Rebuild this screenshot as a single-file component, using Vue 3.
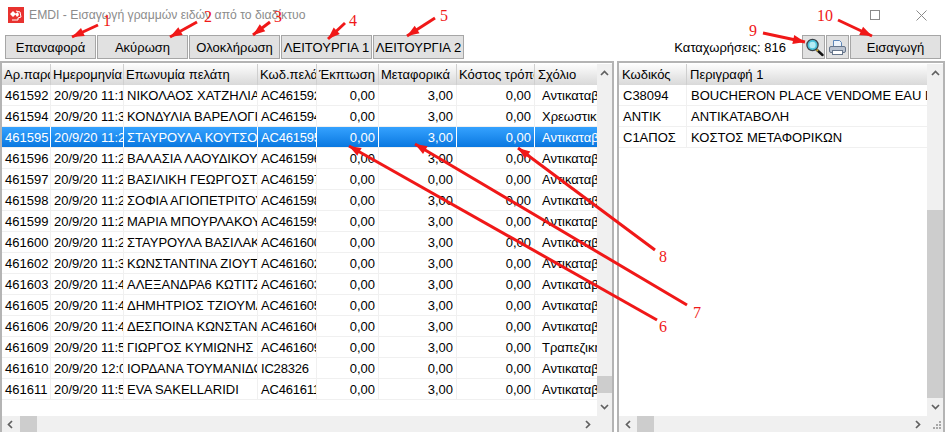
<script setup>
const left = [
  ['461592','20/9/20 11:18','ΝΙΚΟΛΑΟΣ ΧΑΤΖΗΛΙΑΣ ΝΙΚ','AC461592','0,00','3,00','0,00','Αντικαταβολή'],
  ['461594','20/9/20 11:34','ΚΟΝΔΥΛΙΑ ΒΑΡΕΛΟΓΙΑΝΝΗ','AC461594','0,00','3,00','0,00','Χρεωστική'],
  ['461595','20/9/20 11:25','ΣΤΑΥΡΟΥΛΑ ΚΟΥΤΣΟΥΚΗ','AC461595','0,00','3,00','0,00','Αντικαταβολή'],
  ['461596','20/9/20 11:28','ΒΑΛΑΣΙΑ ΛΑΟΥΔΙΚΟΥ ΒΑΣ','AC461596','0,00','3,00','0,00','Αντικαταβολή'],
  ['461597','20/9/20 11:28','ΒΑΣΙΛΙΚΗ ΓΕΩΡΓΟΣΤΑΘΗ','AC461597','0,00','0,00','0,00','Αντικαταβολή'],
  ['461598','20/9/20 11:29','ΣΟΦΙΑ ΑΓΙΟΠΕΤΡΙΤΟΥ ΣΟΦ','AC461598','0,00','3,00','0,00','Αντικαταβολή'],
  ['461599','20/9/20 11:29','ΜΑΡΙΑ ΜΠΟΥΡΛΑΚΟΥ ΜΑΡ','AC461599','0,00','3,00','0,00','Αντικαταβολή'],
  ['461600','20/9/20 11:29','ΣΤΑΥΡΟΥΛΑ ΒΑΣΙΛΑΚΗ ΣΤΑ','AC461600','0,00','3,00','0,00','Αντικαταβολή'],
  ['461602','20/9/20 11:36','ΚΩΝΣΤΑΝΤΙΝΑ ΖΙΟΥΤΗ ΚΩ','AC461602','0,00','3,00','0,00','Αντικαταβολή'],
  ['461603','20/9/20 11:43','ΑΛΕΞΑΝΔΡΑ6 ΚΩΤΙΤΖΑ ΑΛ','AC461603','0,00','3,00','0,00','Αντικαταβολή'],
  ['461605','20/9/20 11:47','ΔΗΜΗΤΡΙΟΣ ΤΖΙΟΥΜΑΣ ΔΗ','AC461605','0,00','3,00','0,00','Αντικαταβολή'],
  ['461606','20/9/20 11:49','ΔΕΣΠΟΙΝΑ ΚΩΝΣΤΑΝΤΙΝΟΥ','AC461606','0,00','3,00','0,00','Αντικαταβολή'],
  ['461609','20/9/20 11:56','ΓΙΩΡΓΟΣ ΚΥΜΙΩΝΗΣ','AC461609','0,00','3,00','0,00','Τραπεζική'],
  ['461610','20/9/20 12:02','ΙΟΡΔΑΝΑ ΤΟΥΜΑΝΙΔΟΥ ΙΟΡ','IC28326','0,00','0,00','0,00','Αντικαταβολή'],
  ['461611','20/9/20 11:58','EVA SAKELLARIDI','AC461611','0,00','3,00','0,00','Αντικαταβολή'],
]
const leftHead = ['Αρ.παραγγελίας','Ημερομηνία','Επωνυμία πελάτη','Κωδ.πελάτη','Έκπτωση','Μεταφορικά','Κόστος τρόπου','Σχόλιο']
const right = [
  ['C38094','BOUCHERON PLACE VENDOME EAU DE PARFUM'],
  ['ΑΝΤΙΚ','ΑΝΤΙΚΑΤΑΒΟΛΗ'],
  ['C1ΑΠΟΣ','ΚΟΣΤΟΣ ΜΕΤΑΦΟΡΙΚΩΝ'],
]
const arrows = [
  [98,25,72,37],[197,22,170,37],[270,22,253,35],[345,23,328,39],[435,18,407,36],
  [657,320,349,146],[687,305,415,144],[655,250,518,148],[763,33,805,42],[838,20,872,36],
]
const labels = [
  ['1',103,12],['2',204,8],['3',274,8],['4',349,12],['5',440,7],
  ['6',659,318],['7',693,304],['8',659,248],['9',749,22],['10',817,7],
]
function head(x1,y1,x2,y2){
  const a=Math.atan2(y2-y1,x2-x1), l=12, w=4.5
  const bx=x2-l*Math.cos(a), by=y2-l*Math.sin(a)
  const nx=-Math.sin(a)*w, ny=Math.cos(a)*w
  return `${x2},${y2} ${bx+nx},${by+ny} ${bx-nx},${by-ny}`
}
</script>

<template>
  <div class="window">
    <div class="titlebar">
      <svg class="appicon" width="16" height="16" viewBox="0 0 16 16">
        <rect width="16" height="16" fill="#e8322f"/>
        <path d="M8 4l4 1 1 5-3 1v2H4" fill="none" stroke="#fff" stroke-width="1"/>
        <path d="M2 7l3-3 3 3-3 3zM7 7l3-2 1 3-2 2z" fill="#fff"/>
      </svg>
      <span class="title">EMDI - Εισαγωγή γραμμών ειδών από το διαδίκτυο</span>
      <span class="spacer"></span>
      <svg class="winbtn max" width="10" height="10" viewBox="0 0 10 10"><rect x=".5" y=".5" width="9" height="9" fill="none" stroke="#8a8a8a"/></svg>
      <svg class="winbtn close" width="11" height="11" viewBox="0 0 11 11"><path d="M.5.5l10 10M10.5.5l-10 10" stroke="#8a8a8a" fill="none"/></svg>
    </div>

    <div class="toolbar">
      <button class="btn b1">Επαναφορά</button>
      <button class="btn b2">Ακύρωση</button>
      <button class="btn b3">Ολοκλήρωση</button>
      <button class="btn b4">ΛΕΙΤΟΥΡΓΙΑ 1</button>
      <button class="btn b5">ΛΕΙΤΟΥΡΓΙΑ 2</button>
      <span class="spacer"></span>
      <span class="count">Καταχωρήσεις: 816</span>
      <button class="btn icon">
        <svg width="20" height="20" viewBox="0 0 20 20">
          <path d="M13 13l5.5 5" stroke="#111" stroke-width="2.4" stroke-linecap="round"/>
          <path d="M12 12l2 2" stroke="#c9a93a" stroke-width="2"/>
          <circle cx="8.5" cy="8" r="5.6" fill="#4cc4dc" stroke="#39424a" stroke-width="1.3"/>
          <circle cx="8.5" cy="8" r="3.2" fill="#b4ecf4"/>
        </svg>
      </button>
      <button class="btn icon">
        <svg width="17" height="17" viewBox="0 0 17 17">
          <path d="M4.5 7V1.5h6l2 2V7" fill="#eef4fb" stroke="#5d86b8"/>
          <rect x=".5" y="7.5" width="16" height="6" rx="1.5" fill="#b9c2cf" stroke="#66758a"/>
          <rect x="3.5" y="11.5" width="10" height="4" fill="#fff" stroke="#66758a"/>
        </svg>
      </button>
      <button class="btn b10">Εισαγωγή</button>
    </div>

    <div class="panes">
      <section class="pane leftpane">
        <div class="gridarea">
          <div class="grid">
            <div class="row headrow l">
              <div v-for="(h,j) in leftHead" :key="h" class="cell hcell" :class="{hnote:j===7}">{{ h }}</div>
            </div>
            <div v-for="(r,i) in left" :key="r[0]" class="row l" :class="{sel:i===2}">
              <div v-for="(c,j) in r" :key="j" class="cell" :class="{num:j>=4&&j<=6, note:j===7, code:j===3}">{{ c }}</div>
            </div>
          </div>
          <div class="vbar">
            <svg class="chev" width="9" height="6" viewBox="0 0 9 6"><path d="M1 5l3.5-3.5L8 5" fill="none" stroke="#606060" stroke-width="1.7"/></svg>
            <div class="track"><div class="thumb leftthumb"></div></div>
            <svg class="chev" width="9" height="6" viewBox="0 0 9 6"><path d="M1 1l3.5 3.5L8 1" fill="none" stroke="#606060" stroke-width="1.7"/></svg>
          </div>
        </div>
        <div class="hbar">
          <svg class="chevh" width="6" height="9" viewBox="0 0 6 9"><path d="M5 1L1.5 4.5 5 8" fill="none" stroke="#606060" stroke-width="1.7"/></svg>
          <div class="htrack"><div class="hthumb"></div></div>
          <svg class="chevh" width="6" height="9" viewBox="0 0 6 9"><path d="M1 1l3.5 3.5L1 8" fill="none" stroke="#606060" stroke-width="1.7"/></svg>
          <div class="corner"></div>
        </div>
      </section>
      <section class="pane rightpane">
        <div class="gridarea">
          <div class="grid">
            <div class="row headrow r">
              <div class="cell hcell">Κωδικός</div>
              <div class="cell hcell">Περιγραφή 1</div>
            </div>
            <div v-for="r in right" :key="r[0]" class="row r">
              <div class="cell">{{ r[0] }}</div>
              <div class="cell">{{ r[1] }}</div>
            </div>
          </div>
          <div class="vbar">
            <svg class="chev" width="9" height="6" viewBox="0 0 9 6"><path d="M1 5l3.5-3.5L8 5" fill="none" stroke="#606060" stroke-width="1.7"/></svg>
            <div class="track"><div class="thumb rightthumb"></div></div>
            <svg class="chev" width="9" height="6" viewBox="0 0 9 6"><path d="M1 1l3.5 3.5L8 1" fill="none" stroke="#606060" stroke-width="1.7"/></svg>
          </div>
        </div>
        <div class="hbar">
          <svg class="chevh" width="6" height="9" viewBox="0 0 6 9"><path d="M5 1L1.5 4.5 5 8" fill="none" stroke="#606060" stroke-width="1.7"/></svg>
          <div class="htrack"><div class="hthumb"></div></div>
          <svg class="chevh" width="6" height="9" viewBox="0 0 6 9"><path d="M1 1l3.5 3.5L1 8" fill="none" stroke="#606060" stroke-width="1.7"/></svg>
          <div class="corner">
            <svg class="grip" width="10" height="10" viewBox="0 0 10 10" fill="#a8a8a8">
              <rect x="7" y="1" width="2" height="2"/><rect x="4" y="4" width="2" height="2"/><rect x="7" y="4" width="2" height="2"/>
              <rect x="1" y="7" width="2" height="2"/><rect x="4" y="7" width="2" height="2"/><rect x="7" y="7" width="2" height="2"/>
            </svg>
          </div>
        </div>
      </section>
    </div>

    <svg class="overlay" width="948" height="433" viewBox="0 0 948 433">
      <g v-for="(a,i) in arrows" :key="i">
        <line :x1="a[0]" :y1="a[1]" :x2="a[2]" :y2="a[3]" stroke="#f01818" stroke-width="3"/>
        <polygon :points="head(a[0],a[1],a[2],a[3])" fill="#f01818"/>
      </g>
    </svg>
    <span v-for="l in labels" :key="l[0]" class="mark" :style="{left:l[1]+'px',top:l[2]+'px'}">{{ l[0] }}</span>
  </div>
</template>

<style>
html, body { margin: 0; background: #fff; }
</style>

<style scoped>
.window {
  position: relative;
  width: 948px;
  height: 433px;
  overflow: hidden;
  background: #fff;
  font-family: "Liberation Sans", Arial, sans-serif;
  font-size: 13px;
  color: #000;
  display: flex;
  flex-direction: column;
}
.titlebar {
  height: 30px;
  display: flex;
  align-items: center;
  padding-left: 8px;
  box-sizing: border-box;
}
.title { margin-left: 5px; color: #8c8c8c; font-size: 12.2px; }
.spacer { flex: 1; }
.winbtn { flex: none; }
.max { margin-right: 36px; }
.close { margin-right: 21px; }

.toolbar {
  height: 29px;
  display: flex;
  align-items: flex-start;
  padding: 5px 7px 0 5px;
  box-sizing: border-box;
}
.btn {
  height: 24px;
  box-sizing: border-box;
  background: #e1e1e1;
  border: 1px solid #a6a6a6;
  padding: 0;
  margin: 0;
  font: inherit;
  color: #000;
  display: flex;
  align-items: center;
  justify-content: center;
  white-space: nowrap;
  overflow: hidden;
}
.b1, .b2, .b3, .b4 { width: 91px; margin-right: 1px; }
.b5 { width: 91px; }
.count { margin: 5px 16px 0 0; }
.icon { width: 23px; margin-right: 1px; }
.b10 { width: 91px; }

.panes {
  flex: 1;
  display: flex;
  padding: 2px 3px 1px 0;
  min-height: 0;
  gap: 3px;
}
.pane {
  display: flex;
  flex-direction: column;
  min-width: 0;
  border: 2px solid #b4b4b4;
  border-bottom: 0;
  box-sizing: border-box;
}
.leftpane { width: 614px; flex: none; }
.rightpane { flex: 1; }
.gridarea { flex: 1; display: flex; min-height: 0; padding-top: 1px; }
.grid { flex: 1; min-width: 0; overflow: hidden; }
.row {
  display: grid;
  height: 21px;
  box-sizing: border-box;
  border-bottom: 1px solid #f0f0f0;
}
.row.l { grid-template-columns: 49px 73px 134px 59px 62px 78px 78px 62px; }
.row.r { grid-template-columns: 68px 1fr; }
.cell {
  box-sizing: border-box;
  padding: 0 0 0 3px;
  line-height: 21px;
  white-space: nowrap;
  overflow: hidden;
  border-right: 1px solid #f0f0f0;
}
.code { letter-spacing: -0.2px; }
.rightpane .cell { padding-left: 4px; }
.rightpane .cell:last-child { border-right: 0; }
.num { text-align: right; padding-right: 3px; }
.note { padding-left: 7px; border-right: 0; }
.headrow { background: linear-gradient(#fdfdfd, #d9d9d9); border-bottom: 0; }
.cell.hcell { padding-left: 2px; border-right: 1px solid #cfcfcf; }
.cell.hnote { padding-left: 3px; border-right: 0; }
.rightpane .cell.hcell { padding-left: 3px; }
.sel { background: linear-gradient(#35a2ff, #0a78e0); color: #fff; }
.sel .cell { border-right-color: #fff; }

.vbar {
  width: 15px;
  flex: none;
  background: #f0f0f0;
  display: flex;
  flex-direction: column;
  align-items: center;
}
.rightpane .vbar { width: 16px; }
.chev { flex: none; margin: 6px 0; }
.track { flex: 1; width: 100%; position: relative; min-height: 0; }
.thumb { position: absolute; left: 0; right: 0; background: #cdcdcd; }
.leftthumb { top: 294px; height: 17px; }
.rightthumb { top: 128px; bottom: 0; }

.hbar {
  height: 16px;
  flex: none;
  background: #f0f0f0;
  display: flex;
  align-items: center;
}
.chevh { flex: none; margin: 0 6px 0 5px; }
.htrack { flex: 1; position: relative; height: 100%; }
.hthumb { position: absolute; left: 1px; width: 17px; top: 0; bottom: 0; background: #cdcdcd; }
.rightpane .chevh:first-child { margin-left: 6px; margin-right: 5px; }
.corner { width: 15px; height: 100%; flex: none; display: flex; align-items: flex-end; justify-content: flex-end; }
.rightpane .corner { width: 16px; }
.grip { flex: none; margin: 0 1px 2px 0; }

.overlay { position: absolute; left: 0; top: 0; pointer-events: none; }
.mark {
  position: absolute;
  color: #f01818;
  font-family: "Liberation Serif", serif;
  font-size: 16px;
  line-height: 18px;
}
</style>
